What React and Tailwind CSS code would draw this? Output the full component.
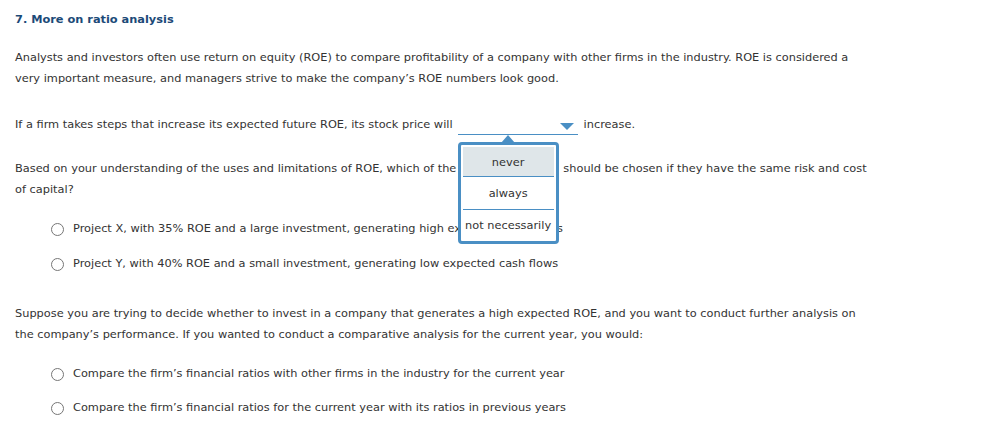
import React from "react";

function Radio({ children }) {
  return (
    <div className="flex items-center h-[20px]">
      <span className="w-[13px] h-[13px] rounded-full border border-[#767676] bg-white mr-[9px] shrink-0" />
      <span>{children}</span>
    </div>
  );
}

export default function App() {
  return (
    <div
      className="w-[993px] h-[433px] bg-white text-[#333] text-[11.35px] overflow-hidden"
      style={{ fontFamily: '"DejaVu Sans", Verdana, sans-serif' }}
    >
      <div className="pl-[15px] pt-[11px]">
        <div className="font-bold text-[#1c4a78] leading-[16px]">7. More on ratio analysis</div>

        <div className="mt-[20px] leading-[21px]">
          <p>Analysts and investors often use return on equity (ROE) to compare profitability of a company with other firms in the industry. ROE is considered a</p>
          <p>very important measure, and managers strive to make the company’s ROE numbers look good.</p>
        </div>

        <div className="mt-[25px] leading-[21px] flex items-end">
          <span>If a firm takes steps that increase its expected future ROE, its stock price will</span>
          <span className="relative ml-[5px] w-[120px] h-[17px] border-b border-[#4a8fc4] inline-block">
            <svg className="absolute right-[4px] top-[5px]" width="14" height="7" viewBox="0 0 14 7">
              <path d="M0 0 H14 L7 7 Z" fill="#4a8fc4" />
            </svg>
            <div className="absolute left-0 top-[24px] w-[101px] z-10">
              <svg className="absolute left-[43px] top-[-7px]" width="14" height="8" viewBox="0 0 14 8">
                <path d="M0 8 L7 0 L14 8 Z" fill="#4a8fc4" />
              </svg>
              <div className="border-[3px] border-[#4a8fc4] rounded-[4px] bg-white p-[2px] text-center leading-[14px]">
                <div className="bg-[#dfe6e9] h-[30px] flex items-center justify-center border-b border-[#4a8fc4]">never</div>
                <div className="h-[33px] flex items-center justify-center border-b border-[#4a8fc4]">always</div>
                <div className="h-[29px] flex items-center justify-center whitespace-nowrap">not necessarily</div>
              </div>
            </div>
          </span>
          <span className="ml-[6px]">increase.</span>
        </div>

        <div className="mt-[23px] leading-[21px]">
          <p className="flex">
            <span>Based on your understanding of the uses and limitations of ROE, which of the</span>
            <span className="inline-block w-[107px] shrink-0" />
            <span>should be chosen if they have the same risk and cost</span>
          </p>
          <p>of capital?</p>
        </div>

        <div className="mt-[19px] pl-[36px] flex flex-col gap-[15px]">
          <Radio>Project X, with 35% ROE and a large investment, generating high expected cash flows</Radio>
          <Radio>Project Y, with 40% ROE and a small investment, generating low expected cash flows</Radio>
        </div>

        <div className="mt-[29px] leading-[21px]">
          <p>Suppose you are trying to decide whether to invest in a company that generates a high expected ROE, and you want to conduct further analysis on</p>
          <p>the company’s performance. If you wanted to conduct a comparative analysis for the current year, you would:</p>
        </div>

        <div className="mt-[19px] pl-[36px] flex flex-col gap-[14px]">
          <Radio>Compare the firm’s financial ratios with other firms in the industry for the current year</Radio>
          <Radio>Compare the firm’s financial ratios for the current year with its ratios in previous years</Radio>
        </div>
      </div>
    </div>
  );
}
